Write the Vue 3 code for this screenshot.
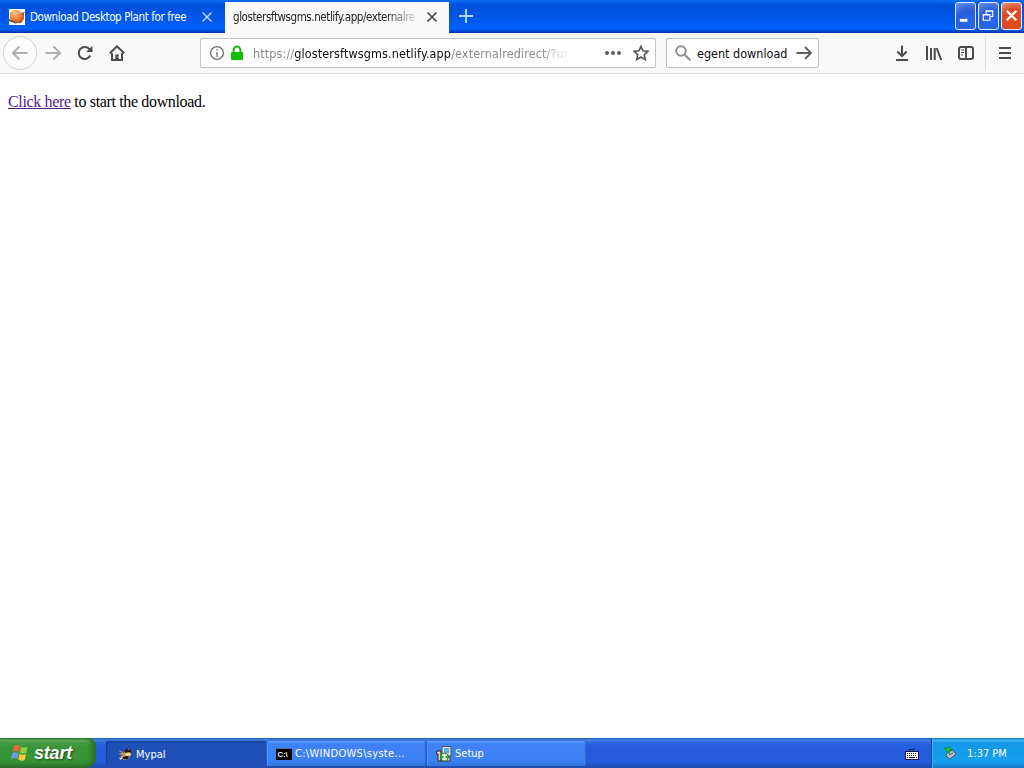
<!--
  Окно браузера на рабочем столе: вкладки, панель навигации, страница и панель задач.
  Вкладки и кнопки задач выводятся из массивов через v-for.
-->

<template>
  <div class="desktop">
    <header class="titlebar">
      <div v-for="tab in tabs" :key="tab.title" class="tab" :class="{ active: tab.active }">
        <svg v-if="!tab.active" class="favicon" viewBox="0 0 16 16">
          <defs>
            <radialGradient id="fruit" cx="0.35" cy="0.25" r="0.9">
              <stop offset="0" stop-color="#ffc48a" />
              <stop offset="0.5" stop-color="#f58434" />
              <stop offset="1" stop-color="#a03c14" />
            </radialGradient>
          </defs>
          <rect width="16" height="16" fill="#fff" />
          <path d="M1 4L5 1L9 1L12 4L15 4V10L12 14H7L1 10Z" fill="url(#fruit)" />
          <path d="M0 10L5 12L8 15L5 14L0 12Z" fill="#555" />
          <path d="M12 4L16 3L14 6Z" fill="#8b4525" />
        </svg>
        <span class="tab-title">{{ tab.title }}</span>
        <svg class="tab-close" viewBox="0 0 12 12">
          <path d="M1.5 1.5L10.5 10.5M10.5 1.5L1.5 10.5" />
        </svg>
      </div>
      <svg class="new-tab" viewBox="0 0 16 16"><path d="M8 1V15M1 8H15" /></svg>
      <div class="window-buttons">
        <button class="window-button">
          <svg viewBox="0 0 20 26"><rect x="4" y="16" width="8" height="3" fill="#fff" /></svg>
        </button>
        <button class="window-button">
          <svg viewBox="0 0 20 26">
            <path d="M7.5 11V7.5H14.5V13.5H12M7 8H15" class="line" />
            <path d="M4.5 11.5H11.5V17.5H4.5ZM4 12H12" class="line" />
          </svg>
        </button>
        <button class="window-button close">
          <svg viewBox="0 0 20 26"><path d="M5 7.5L15 17.5M15 7.5L5 17.5" class="cross" /></svg>
        </button>
      </div>
    </header>

    <nav class="toolbar">
      <div class="nav-group">
        <span class="back">
          <svg viewBox="0 0 16 16"><path d="M15.5 8H1M7.5 1.5L1 8L7.5 14.5" /></svg>
        </span>
        <svg class="forward" viewBox="0 0 16 16"><path d="M0.5 8H15M8.5 1.5L15 8L8.5 14.5" /></svg>
        <svg class="icon reload" viewBox="0 0 16 16">
          <path d="M13.2 10.5A6 6 0 1 1 12.5 4.2" class="thick" />
          <path d="M15.5 0.8V7H9.2Z" fill="#4a4a4f" />
        </svg>
        <svg class="icon home" viewBox="0 0 16 16">
          <path d="M0.8 8.3L8 1.3L15.2 8.3" class="thick" />
          <path d="M3 8V15H13V8" class="thick" />
          <path d="M6.3 15V9.5H9.7V15Z" fill="#4a4a4f" />
          <path d="M8.5 12H9.5" stroke="#fff" stroke-width="1" />
        </svg>
      </div>

      <div class="url-bar">
        <svg class="info" viewBox="0 0 16 16">
          <circle cx="8" cy="8" r="6.4" />
          <path d="M8 7V12" />
          <path d="M8 4.2V5.8" />
        </svg>
        <svg class="lock" viewBox="0 0 14 16">
          <path d="M3.6 8V5A3.4 3.4 0 0 1 10.4 5V8" fill="none" stroke="#12bc00" stroke-width="2" />
          <rect x="1" y="7" width="12" height="8" rx="1" fill="#12bc00" />
        </svg>
        <span class="url">
          <span class="scheme">https://</span><span class="host">glostersftwsgms.netlify.app</span><span class="path">/externalredirect/?ur</span>
        </span>
        <svg class="dots" viewBox="0 0 16 16">
          <circle cx="2" cy="8" r="2" /><circle cx="8" cy="8" r="2" /><circle cx="14" cy="8" r="2" />
        </svg>
        <svg class="star" viewBox="0 0 16 16">
          <path d="M8 1.3L10 5.8L15 6.3L11.3 9.6L12.3 14.6L8 12L3.7 14.6L4.7 9.6L1 6.3L6 5.8Z" />
        </svg>
      </div>

      <div class="search-bar">
        <svg class="magnifier" viewBox="0 0 16 16">
          <circle cx="6" cy="6" r="4.8" /><path d="M9.5 9.5L15.3 15.3" />
        </svg>
        <span class="query">egent download</span>
        <svg class="go" viewBox="0 0 16 16"><path d="M0.5 8H15M9 2L15 8L9 14" /></svg>
      </div>

      <div class="tools">
        <svg class="icon" viewBox="0 0 16 16">
          <path d="M8 0.5V11M3.3 6.5L8 11.2L12.7 6.5M2 15H14" class="thick" />
        </svg>
        <svg class="icon" viewBox="0 0 16 16">
          <path d="M1 1V15M5 3V15M8.7 3V15M10.7 3L15.2 15" class="thick" />
        </svg>
        <svg class="icon" viewBox="0 0 16 16">
          <rect x="1" y="2" width="14" height="12" rx="2" class="thick" />
          <path d="M8 2V14" class="thick" />
          <path d="M3 5H6M3 7.5H6M3 10H5" stroke="#4a4a4f" stroke-width="1" />
        </svg>
      </div>
      <div class="menu">
        <svg class="icon" viewBox="0 0 16 16"><path d="M2 3H14M2 8H14M2 13H14" class="thick" /></svg>
      </div>
    </nav>

    <main class="page">
      <a class="link">Click here</a> to start the download.
    </main>

    <footer class="taskbar">
      <button class="start">
        <svg class="flag" viewBox="0 0 20 20">
          <path d="M4 3Q7 1 10 3.2L8.8 9Q5.7 7 2.7 8.8Z" fill="#ee6439" />
          <path d="M11 3.7Q14 5.5 17.5 3.8L16.3 9.7Q13 11.4 9.8 9.5Z" fill="#91ce45" />
          <path d="M2.4 10Q5.5 8.3 8.6 10.2L7.4 16Q4 14 1 15.9Z" fill="#6f9bed" />
          <path d="M9.5 10.7Q12.7 12.5 16 10.9L14.8 16.8Q11.5 18.6 8.3 16.6Z" fill="#fbc832" />
        </svg>
        <span class="start-text">start</span>
      </button>

      <div class="tasks">
        <button v-for="task in tasks" :key="task.title" class="task" :class="{ pressed: task.pressed }">
          <svg v-if="task.icon === 'mypal'" class="task-icon" viewBox="0 0 16 16">
            <path d="M1 4L4 5L7 7L10 3L15 4L14 9L11 13L6 14L8 11L3 11L6 9L1 8L5 7Z" fill="#d79a4c" />
            <path d="M8 4L10 2L11 4L14 3L15 7L12 6L8 7ZM6 11L12 9L11 13L7 13Z" fill="#24180f" />
            <path d="M8 8L11 7L14 9L10 10ZM2 12L6 11L4 14Z" fill="#fff0c9" />
          </svg>
          <svg v-else-if="task.icon === 'cmd'" class="task-icon" viewBox="0 0 16 16">
            <rect x="0" y="2" width="16" height="12" fill="#000" />
            <path d="M0 2.5H16" stroke="#5b6f96" />
            <text x="1.5" y="10.5" class="prompt">C:\</text>
          </svg>
          <svg v-else class="task-icon" viewBox="0 0 16 16">
            <path d="M6 0.5H15V10H6Z" fill="#d7dde0" stroke="#555" />
            <path d="M8 2H13V7H8Z" fill="#58b4ee" />
            <path d="M1 5H5V15H2V8H0Z" fill="#ddd6b4" stroke="#222" />
            <path d="M5 11H14V15H5Z" fill="#eee" stroke="#333" />
            <circle cx="8.5" cy="11" r="4" fill="#d9eed6" stroke="#257b2d" />
            <path d="M8.5 11L5 9V13ZM8.5 11L12 9V13Z" fill="#34a239" />
            <circle cx="8.5" cy="11" r="1" fill="#fff" />
          </svg>
          <span class="task-title">{{ task.title }}</span>
        </button>
      </div>

      <svg class="keyboard" viewBox="0 0 14 14">
        <path d="M4 4V2.5H9V1" fill="none" stroke="#17255d" />
        <rect x="0.5" y="4.5" width="13" height="8" fill="#fff" stroke="#111b52" />
        <path d="M2 6.5H12M2 8.5H12" stroke="#111" stroke-dasharray="1 1" />
        <path d="M2 10.5H3M4 10.5H10M11 10.5H12" stroke="#111" />
      </svg>

      <div class="tray">
        <svg class="tray-icon" viewBox="0 0 16 16">
          <path d="M5 8L10 5L14 9L8 14L4 11Z" fill="#b9c4c6" stroke="#4b5960" />
          <path d="M7 10L11 8" stroke="#46545a" />
          <path d="M2 3L8 2L10 6L8 5L7 9L4 5Z" fill="#24b53c" stroke="#16772c" stroke-width="0.6" />
        </svg>
        <span class="clock">1:37 PM</span>
      </div>
    </footer>
  </div>
</template>

<script setup>
const tabs = [
  { title: 'Download Desktop Plant for free', active: false },
  { title: 'glostersftwsgms.netlify.app/externalre', active: true }
];

const tasks = [
  { title: 'Mypal', icon: 'mypal', pressed: true },
  { title: 'C:\\WINDOWS\\syste...', icon: 'cmd', pressed: false },
  { title: 'Setup', icon: 'setup', pressed: false }
];
</script>

<style>
body {
  margin: 0;
  overflow: hidden;
}
</style>

<style scoped>
.desktop {
  display: flex;
  flex-direction: column;
  width: 1024px;
  height: 768px;
  background: #fff;
  font-family: "DejaVu Sans Condensed", "DejaVu Sans", sans-serif;
  font-stretch: condensed;
  font-size: 11px;
}

svg {
  display: block;
  flex: none;
  fill: none;
}

button {
  font: inherit;
  padding: 0;
  border: 0;
  text-align: left;
}

.titlebar {
  display: flex;
  flex: none;
  height: 33px;
  background: linear-gradient(#0a70f5 0, #0560ef 2px, #0051dc 5px, #0054e2 12px, #005bf4 24px, #0062ff 29px, #0049d2 31px, #00309c 33px);
}

.tab {
  display: flex;
  align-items: center;
  box-sizing: border-box;
  width: 225px;
  padding: 1px 12px 0 9px;
  color: #fff;
}

.tab.active {
  width: 224px;
  height: 31px;
  margin-top: 2px;
  padding: 0 11px 1px 8px;
  background: #f9f9fa;
  color: #222;
}

.favicon {
  width: 16px;
  height: 16px;
  margin-right: 5px;
}

.tab-title {
  flex: 1;
  white-space: nowrap;
  font-size: 11.5px;
  letter-spacing: -0.38px;
}

.active .tab-title {
  letter-spacing: -0.42px;
  margin-right: 6px;
  mask-image: linear-gradient(to right, #000 82%, transparent);
}

.tab-close {
  width: 12px;
  height: 12px;
  stroke: #c4dcff;
  stroke-width: 1.4;
}

.active .tab-close {
  stroke: #444;
  stroke-width: 1.6;
}

.new-tab {
  width: 16px;
  height: 16px;
  margin: 8px 0 0 9px;
  stroke: #b9d3ff;
  stroke-width: 2;
}

.window-buttons {
  display: flex;
  gap: 2px;
  margin: 2px 2px 0 auto;
}

.window-button {
  box-sizing: border-box;
  width: 21px;
  height: 28px;
  border: 1px solid #e4ecff;
  border-radius: 3px;
  background: radial-gradient(circle at 70% 75%, #2466f0, #2c5fda 55%, #6d92ec 100%);
}

.window-button:nth-child(2) {
  width: 21px;
}

.window-button.close {
  background: radial-gradient(circle at 65% 70%, #e44a18, #d84a27 55%, #ef9a80 100%);
}

.window-button svg {
  width: 100%;
  height: 26px;
}

.line {
  stroke: #fff;
  stroke-width: 1.2;
}

.cross {
  stroke: #fff;
  stroke-width: 2.3;
}

.toolbar {
  display: flex;
  flex: none;
  align-items: center;
  box-sizing: border-box;
  height: 41px;
  border-bottom: 1px solid #dcdcdc;
  background: #f9f9fa;
}

.nav-group {
  display: flex;
  align-items: center;
  width: 200px;
  padding-left: 3px;
  box-sizing: border-box;
}

.back {
  display: flex;
  align-items: center;
  justify-content: center;
  box-sizing: border-box;
  width: 34px;
  height: 34px;
  border: 1px solid #d2d2d3;
  border-radius: 50%;
  background: #fcfcfc;
}

.back svg,
.forward {
  width: 16px;
  height: 16px;
  stroke: #b0b0b2;
  stroke-width: 2;
}

.forward {
  margin-left: 8px;
}

.icon {
  width: 16px;
  height: 16px;
}

.reload,
.home {
  margin-left: 16px;
}

.thick {
  stroke: #4a4a4f;
  stroke-width: 2;
}

.url-bar,
.search-bar {
  display: flex;
  align-items: center;
  box-sizing: border-box;
  height: 30px;
  border: 1px solid #c0c0c2;
  border-radius: 2px;
  background: #fff;
  font-size: 12.5px;
}

.url-bar {
  width: 456px;
  padding: 0 6px 0 8px;
}

.info {
  width: 16px;
  height: 16px;
  stroke: #6d6d70;
  stroke-width: 1.3;
}

.lock {
  width: 14px;
  height: 16px;
  margin: 0 9px 0 5px;
}

.url {
  width: 317px;
  white-space: nowrap;
  letter-spacing: 0.12px;
  mask-image: linear-gradient(to right, #000 91%, transparent 100%);
}

.scheme,
.path {
  color: #8b8b8d;
}

.host {
  color: #0c0c0d;
}

.dots {
  width: 16px;
  height: 16px;
  margin-left: auto;
  fill: #5c5c60;
}

.star {
  width: 16px;
  height: 16px;
  margin-left: 12px;
  stroke: #5c5c60;
  stroke-width: 1.7;
}

.search-bar {
  width: 153px;
  margin-left: 10px;
  padding: 0 6px 0 8px;
}

.magnifier {
  width: 16px;
  height: 16px;
  stroke: #8e8e90;
  stroke-width: 2;
}

.query {
  margin-left: 6px;
  white-space: nowrap;
  color: #0c0c0d;
}

.go {
  width: 16px;
  height: 16px;
  margin-left: auto;
  stroke: #5c5c60;
  stroke-width: 1.8;
}

.tools {
  display: flex;
  gap: 16px;
  margin-left: auto;
  padding-right: 11px;
}

.menu {
  display: flex;
  align-items: center;
  height: 36px;
  padding: 0 11px;
  border-left: 1px solid #dedee0;
}

.page {
  flex: 1;
  padding: 19px 8px;
  font-family: "Liberation Serif", serif;
  font-size: 16px;
  line-height: 18px;
  letter-spacing: -0.35px;
  color: #000;
}

.link {
  color: #551a8b;
  text-decoration: underline;
}

.taskbar {
  display: flex;
  flex: none;
  height: 30px;
  background: linear-gradient(#2453b8 0, #3f83ea 2px, #3069df 4px, #245cdb 8px, #245bda 24px, #1f4cae 30px);
}

.start {
  display: flex;
  align-items: center;
  box-sizing: border-box;
  width: 96px;
  height: 30px;
  padding-left: 10px;
  border-radius: 0 8px 10px 0;
  background: linear-gradient(#32712c 0, #6cb365 2px, #459c40 5px, #389537 10px, #389338 24px, #286f2b 30px);
  box-shadow: inset -4px 0 5px #286b2b;
}

.flag {
  width: 20px;
  height: 20px;
}

.start-text {
  margin: 0 0 0 4px;
  font-family: "Liberation Sans", sans-serif;
  font-size: 18px;
  line-height: 20px;
  letter-spacing: -0.2px;
  font-weight: bold;
  font-style: italic;
  color: #fff;
  text-shadow: 1px 1px 2px #1c4a1c;
}

.tasks {
  display: flex;
  gap: 1px;
  margin-left: 10px;
  padding-top: 3px;
}

.task {
  display: flex;
  align-items: center;
  box-sizing: border-box;
  width: 159px;
  height: 25px;
  padding-left: 9px;
  border-radius: 2px;
  background: linear-gradient(#629bfa 0, #3f82f5 3px, #3c81f3 20px, #3472dc 25px);
  box-shadow: inset 1px 0 #5c94f6, inset -1px 0 #2f68ce;
  color: #fff;
}

.task.pressed {
  width: 160px;
  padding: 1px 0 0 11px;
  background: #1e50b8;
  box-shadow: inset 1px 1px 1px #153a86;
}

.task-icon {
  width: 16px;
  height: 16px;
}

.prompt {
  font-family: "Liberation Sans", sans-serif;
  font-size: 7.5px;
  font-weight: bold;
  fill: #fff;
}

.task-title {
  margin-left: 3px;
  white-space: nowrap;
}

.task:nth-child(2) .task-title {
  letter-spacing: 0.3px;
}

.keyboard {
  width: 14px;
  height: 14px;
  margin: 9px 12px 0 auto;
}

.tray {
  display: flex;
  align-items: center;
  box-sizing: border-box;
  width: 93px;
  padding-left: 10px;
  border-left: 1px solid #123f9b;
  background: linear-gradient(#0c66b5 0, #3fbdf5 2px, #1795e8 5px, #129ae9 10px, #179ff0 24px, #1278c5 30px);
  box-shadow: inset 1px 0 #37b8f3;
  color: #fff;
}

.tray-icon {
  width: 16px;
  height: 16px;
}

.clock {
  margin-left: 9px;
  white-space: nowrap;
}
</style>
